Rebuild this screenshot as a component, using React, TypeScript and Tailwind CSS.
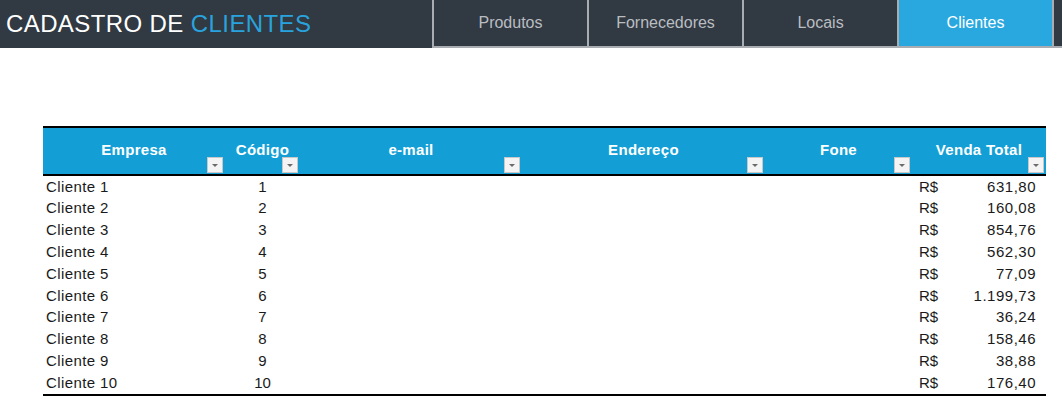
import React from "react";

interface Row {
  empresa: string;
  codigo: number;
  valor: string;
}

const rows: Row[] = [
  { empresa: "Cliente 1", codigo: 1, valor: "631,80" },
  { empresa: "Cliente 2", codigo: 2, valor: "160,08" },
  { empresa: "Cliente 3", codigo: 3, valor: "854,76" },
  { empresa: "Cliente 4", codigo: 4, valor: "562,30" },
  { empresa: "Cliente 5", codigo: 5, valor: "77,09" },
  { empresa: "Cliente 6", codigo: 6, valor: "1.199,73" },
  { empresa: "Cliente 7", codigo: 7, valor: "36,24" },
  { empresa: "Cliente 8", codigo: 8, valor: "158,46" },
  { empresa: "Cliente 9", codigo: 9, valor: "38,88" },
  { empresa: "Cliente 10", codigo: 10, valor: "176,40" },
];

const tabs = ["Produtos", "Fornecedores", "Locais", "Clientes"];

function FilterButton() {
  return (
    <div className="w-[16px] h-[16px] bg-[#f4f4f4] border border-[#c8c8c8] flex items-center justify-center">
      <svg width="8" height="5" viewBox="0 0 8 5">
        <path d="M1 1 L7 1 L4 4 Z" fill="#6b6b6b" />
      </svg>
    </div>
  );
}

function HeaderCell({ label, width }: { label: string; width: string }) {
  return (
    <div className={`${width} relative h-full flex items-center justify-center`}>
      <span className="font-bold text-white text-[15px] -mt-[2px] tracking-[0.3px]">{label}</span>
      <div className="absolute right-[2px] bottom-[1px]">
        <FilterButton />
      </div>
    </div>
  );
}

export default function App() {
  return (
    <div className="w-[1062px] h-[410px] bg-white overflow-hidden" style={{ fontFamily: '"Liberation Sans", Arial, sans-serif' }}>
      {/* Top bar */}
      <div className="flex h-[48px] bg-[#313942]">
        <div className="w-[432px] h-[47px] flex items-center pl-[6px]">
          <span className="text-[24px] text-white tracking-[0.4px] font-light">
            CADASTRO DE <span className="text-[#29a3dd]">CLIENTES</span>
          </span>
        </div>
        <div className="flex flex-1 border-b-2 border-[#a9adb1]">
          {tabs.map((t) => (
            <div
              key={t}
              className={`w-[155px] flex items-center justify-center border-l-2 border-[#a9adb1] text-[16px] ${
                t === "Clientes" ? "bg-[#29a8e0] text-white" : "text-[#b9bdc1]"
              }`}
            >
              {t}
            </div>
          ))}
          <div className="flex-1 border-l-2 border-[#a9adb1]" />
        </div>
      </div>

      {/* Table */}
      <div className="ml-[43px] mt-[78px] w-[1003px] text-[15px] text-[#1a1a1a]">
        <div className="flex h-[50px] border-t-2 border-b-2 border-black bg-[#139fd6]">
          <HeaderCell label="Empresa" width="w-[182px]" />
          <HeaderCell label="Código" width="w-[75px]" />
          <HeaderCell label="e-mail" width="w-[222px]" />
          <HeaderCell label="Endereço" width="w-[243px]" />
          <HeaderCell label="Fone" width="w-[147px]" />
          <HeaderCell label="Venda Total" width="w-[134px]" />
        </div>
        <div className="border-b-2 border-black">
          {rows.map((r) => (
            <div key={r.codigo} className="flex h-[21.8px] items-center">
              <div className="w-[182px] pl-[3px] tracking-[0.4px]">{r.empresa}</div>
              <div className="w-[75px] text-center">{r.codigo}</div>
              <div className="w-[222px]" />
              <div className="w-[243px]" />
              <div className="w-[147px]" />
              <div className="w-[134px] flex pl-[7px] pr-[10px]">
                <span>R$</span>
                <span className="flex-1 text-right tracking-[0.5px]">{r.valor}</span>
              </div>
            </div>
          ))}
        </div>
      </div>
    </div>
  );
}
